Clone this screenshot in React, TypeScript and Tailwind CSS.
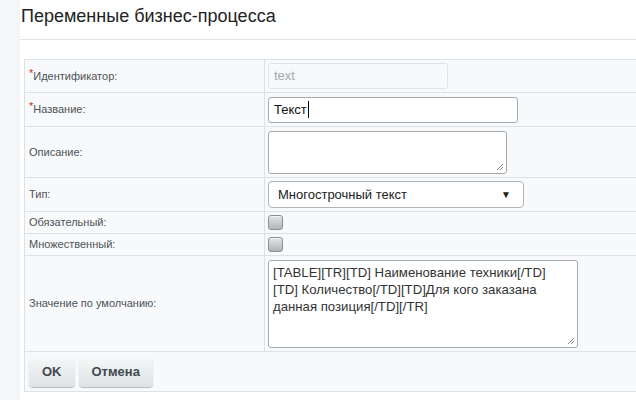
import React from "react";

const font = { fontFamily: '"Liberation Sans", Arial, sans-serif' };

function Row({
  label,
  required,
  h,
  children,
}: {
  label: string;
  required?: boolean;
  h: string;
  children: React.ReactNode;
}) {
  return (
    <div className={`flex border-b border-[#dce1e5] ${h}`}>
      <div className="flex w-[240px] shrink-0 items-center border-r border-[#dce1e5] pl-[4px] text-[11px] text-[#4d5358]">
        {required && <span className="relative -top-[3px] text-[#d2282d]">*</span>}
        {label}
      </div>
      <div className="flex flex-1 items-center pl-[3px]">{children}</div>
    </div>
  );
}

function Check() {
  return (
    <div className="h-[15px] w-[15px] rounded-[3px] border border-[#8a9095] bg-gradient-to-b from-[#e3e5e7] to-[#b0b5b9] shadow-[inset_0_1px_0_#f2f3f4]" />
  );
}

export default function App() {
  return (
    <div className="flex h-[400px] w-[636px] bg-[#f4f6f7]" style={font}>
      <div className="w-[20px] shrink-0" />
      <div className="flex flex-1 flex-col bg-white">
        <div className="h-[40px] border-b border-[#e3e6e8] pl-[1px] pt-[4px] text-[18px] leading-[24px] text-[#222]">
          Переменные бизнес-процесса
        </div>
        <div className="ml-[4px] mt-[19px] border-l border-t border-[#dce1e5] bg-[#f8f9fa]">
          <Row label="Идентификатор:" required h="h-[33px]">
            <div className="flex h-[26px] w-[180px] items-center rounded-[3px] border border-[#e1e4e7] bg-[#f8f9fa] px-[5px] text-[13px] text-[#a5a9ad]">
              text
            </div>
          </Row>
          <Row label="Название:" required h="h-[34px]">
            <div className="flex h-[26px] w-[250px] items-center rounded-[3px] border border-[#a5aaae] bg-white px-[5px] text-[13px] text-[#111]">
              Текст<span className="ml-[1px] h-[17px] w-px bg-black" />
            </div>
          </Row>
          <Row label="Описание:" h="h-[51px]">
            <div className="relative h-[43px] w-[239px] rounded-[3px] border border-[#a5aaae] bg-white">
              <ResizeGrip />
            </div>
          </Row>
          <Row label="Тип:" h="h-[34px]">
            <div className="flex h-[27px] w-[256px] items-center justify-between rounded-[4px] border border-[#b0b5b9] bg-white pl-[9px] pr-[12px] text-[13px] text-[#222]">
              <span>Многострочный текст</span>
              <span className="text-[10px] text-[#222]">▼</span>
            </div>
          </Row>
          <Row label="Обязательный:" h="h-[22px]">
            <Check />
          </Row>
          <Row label="Множественный:" h="h-[22px]">
            <Check />
          </Row>
          <Row label="Значение по умолчанию:" h="h-[96px]">
            <div className="relative h-[88px] w-[310px] rounded-[3px] border border-[#a5aaae] bg-white px-[4px] pt-[3px] text-[13.2px] leading-[17px] text-[#333]">
              [TABLE][TR][TD] Наименование техники[/TD]
              <br />
              [TD] Количество[/TD][TD]Для кого заказана
              <br />
              данная позиция[/TD][/TR]
              <ResizeGrip />
            </div>
          </Row>
          <div className="flex h-[40px] items-center gap-[4px] border-b border-[#dce1e5] pl-[4px]">
            <Button>OK</Button>
            <Button>Отмена</Button>
          </div>
        </div>
      </div>
    </div>
  );
}

function Button({ children }: { children: React.ReactNode }) {
  return (
    <div className="flex h-[31px] items-center rounded-[4px] bg-gradient-to-b from-[#f7f8f9] to-[#dde2e4] px-[13px] text-[13px] font-bold text-[#3f4850] shadow-[0_1px_1px_rgba(0,0,0,0.25)]">
      {children}
    </div>
  );
}

function ResizeGrip() {
  return (
    <svg className="absolute bottom-[2px] right-[2px]" width="8" height="8" viewBox="0 0 8 8">
      <path d="M7 1L1 7M7 4L4 7" stroke="#888" strokeWidth="1" />
    </svg>
  );
}
